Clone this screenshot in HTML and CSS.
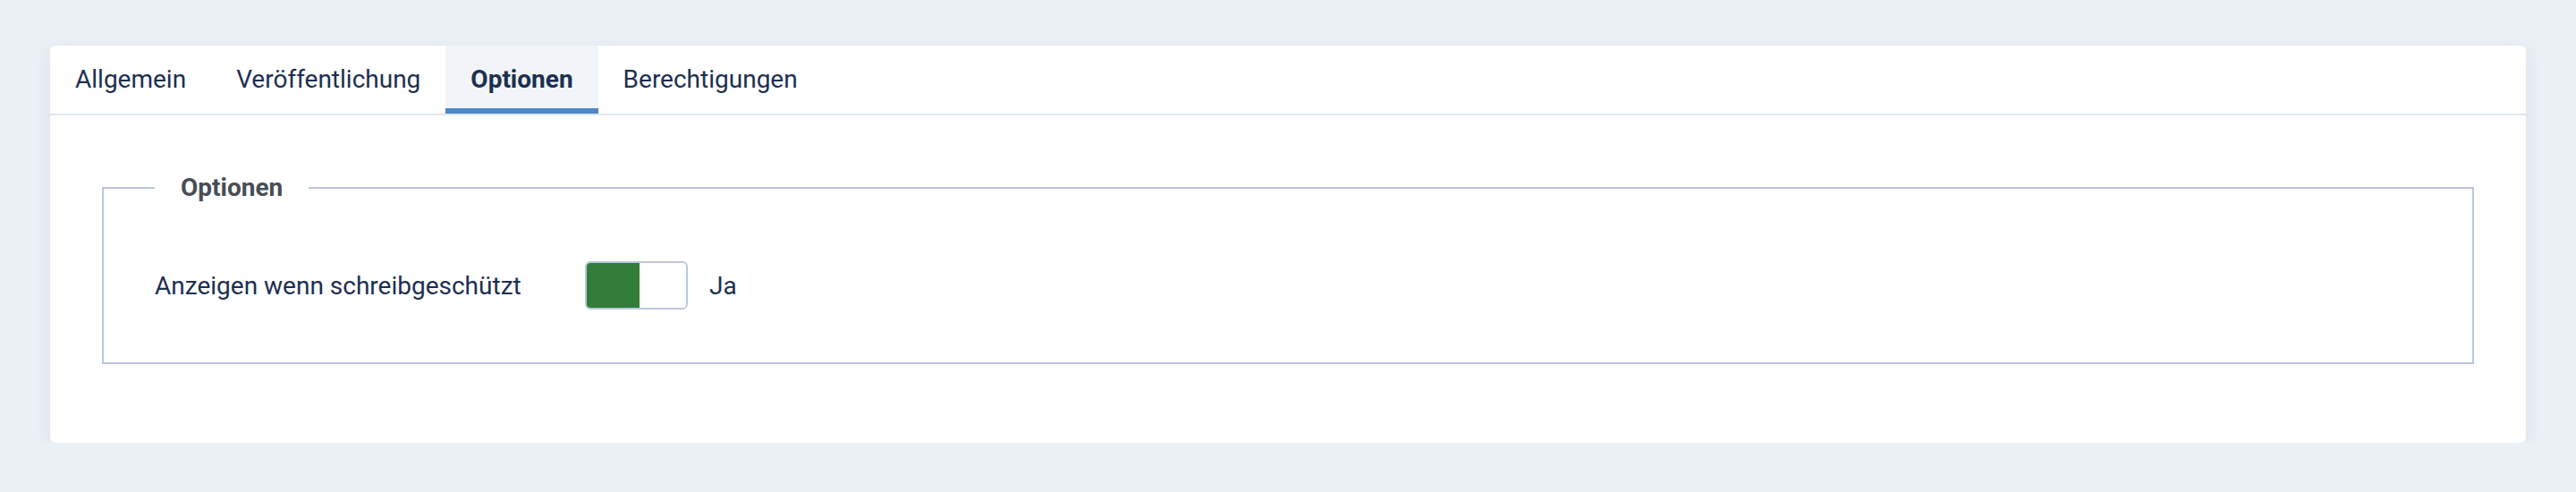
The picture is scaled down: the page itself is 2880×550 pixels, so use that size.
FILE: index.html
```html
<!DOCTYPE html>
<html lang="de">

<head>
    <meta charset="UTF-8">
    <meta name="viewport" content="width=device-width, initial-scale=1.0">
    <title>Optionen</title>
    <link rel="stylesheet" href="styles.css">
</head>

<body>
    <div class="card">
        <ul class="tabs">
            <li>Allgemein</li>
            <li>Veröffentlichung</li>
            <li class="active">Optionen</li>
            <li>Berechtigungen</li>
        </ul>
        <div class="card-body">
            <fieldset class="options">
                <legend>Optionen</legend>
                <div class="control-row">
                    <label class="control-label">Anzeigen wenn schreibgeschützt</label>
                    <div class="switcher">
                        <span class="switcher-on"></span>
                        <span class="switcher-off"></span>
                    </div>
                    <span class="switcher-text">Ja</span>
                </div>
            </fieldset>
        </div>
    </div>
</body>

</html>
```

FILE: styles.css
```css
* {
    margin: 0;
    padding: 0;
    box-sizing: border-box;
}

body {
    background: #ebf0f5;
    font-family: Roboto, "Liberation Sans", sans-serif;
    font-size: 28px;
    color: #1c2f50;
    padding: 51px 56px 0;
}

.card {
    background: #fff;
    border-radius: 6px;
    box-shadow: 0 5px 16px rgba(180, 195, 220, 0.35);
    overflow: hidden;
}

.tabs {
    display: flex;
    list-style: none;
    border-bottom: 2px solid #dfe6f0;
}

.tabs li {
    padding: 0 28px;
    line-height: 76px;
    height: 76px;
}

.tabs li.active {
    background: #f1f5f9;
    font-weight: 700;
    box-shadow: inset 0 -6px 0 #5087c7;
}

.card-body {
    padding: 59px 58px 88px;
}

.options {
    border: 2px solid #b9c8de;
    padding: 60px 57px 59px;
}

.options legend {
    padding: 0 29px;
    line-height: 44px;
    font-weight: 700;
    color: #474e55;
}

.control-row {
    display: flex;
    align-items: center;
    height: 54px;
}

.control-label {
    width: 481px;
}

.switcher {
    display: flex;
    width: 115px;
    height: 54px;
    border: 2px solid #b9c8de;
    border-radius: 6px;
    overflow: hidden;
}

.switcher-on {
    width: 59px;
    background: #317d39;
}

.switcher-off {
    flex: 1;
    background: #fff;
}

.switcher-text {
    margin-left: 24px;
}
```
